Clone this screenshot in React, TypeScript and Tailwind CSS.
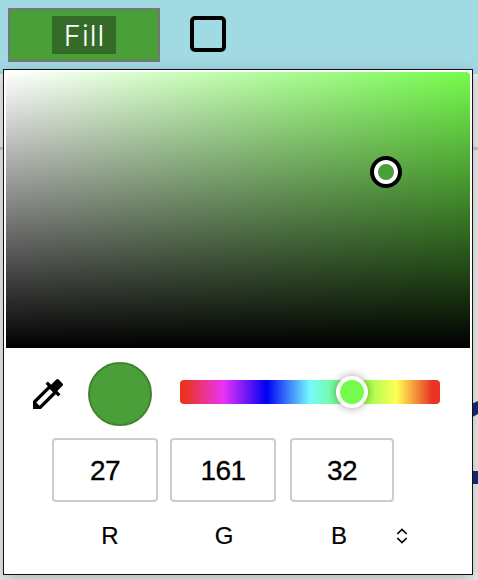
const hueStops =
  'bg-[linear-gradient(to_right,#ea3323_0%,#ea3323_2%,#ea33f7_16.67%,#0000f5_33.33%,#75fbfd_50%,#75fb4c_66.67%,#ffff54_83.33%,#ea3323_97%,#ea3323_100%)]';

function Toolbar() {
  return (
    <header className="flex h-[74px] items-start bg-[#a2dae4] pl-2 pt-2">
      <button className="flex h-[54px] w-[152px] justify-center border-2 border-[#777777] bg-[#4b9f38] pt-1.5">
        <span className="flex h-[38px] w-16 items-center justify-center bg-[#356b28] pl-px pt-px font-['Inter',sans-serif] text-[29px] font-light leading-none tracking-[1px] text-white">
          Fill
        </span>
      </button>
      <span className="ml-[30px] mt-2 size-9 rounded-[5px] border-4 border-black" />
    </header>
  );
}

function Dropper() {
  return (
    <svg className="size-10" viewBox="0 0 24 24" fill="black">
      <path d="M20.71 5.63l-2.34-2.34a.996.996 0 0 0-1.41 0l-3.12 3.12-1.93-1.91-1.41 1.41 1.42 1.42L3 16.25V21h4.75l8.92-8.92 1.42 1.42 1.41-1.41-1.92-1.92 3.12-3.12c.4-.4.4-1.03.01-1.42zM6.92 19L5 17.08l8.06-8.06 1.92 1.92L6.92 19z" />
    </svg>
  );
}

function Channel({ value, className }: { value: number; className: string }) {
  return (
    <div className={`flex h-16 items-center justify-center rounded border-2 border-[#cccccc] pt-px text-[28px] leading-none tracking-[-0.5px] [-webkit-text-stroke:0.3px_black] ${className}`}>
      {value}
    </div>
  );
}

function ColorPicker() {
  return (
    <section className="absolute left-[3px] top-[69px] h-[506px] w-[470px] border border-[#111111] bg-white px-0.5 pt-0.5 font-['Liberation_Sans',Arial,sans-serif] text-black shadow-[0_5px_16px_rgba(0,0,0,0.24)]">
      <div className="relative h-[276px] rounded-t bg-[linear-gradient(to_top,#000,transparent),linear-gradient(to_right,#fff,#75fb4c)]">
        <span className="absolute left-[364px] top-[84px] size-8 rounded-full border-4 border-black bg-black">
          <span className="block size-6 rounded-full border-4 border-white bg-[#4b9f38]" />
        </span>
      </div>
      <div className="flex h-[90px] items-start pl-[22px] pt-3.5">
        <div className="mt-3">
          <Dropper />
        </div>
        <span className="ml-5 size-16 rounded-full border-2 border-[#42832f] bg-[#4b9f38]" />
        <div className={`relative ml-7 mt-[18px] h-6 w-[260px] rounded ${hueStops}`}>
          <span className="absolute -top-1 left-[156px] size-8 rounded-full border-4 border-white bg-[#75fb4c] shadow-[0_0_8px_rgba(0,0,0,0.37)]" />
        </div>
      </div>
      <div className="flex pl-[46px]">
        <Channel value={27} className="w-[106px]" />
        <Channel value={161} className="ml-3 w-[106px]" />
        <Channel value={32} className="ml-3.5 w-[104px]" />
      </div>
      <div className="mt-[22px] flex h-6 items-center pl-[88px] text-[24px] leading-none [-webkit-text-stroke:0.2px_black]">
        <span className="w-8 text-center">R</span>
        <span className="ml-[82px] w-8 text-center">G</span>
        <span className="ml-[83px] w-8 text-center">B</span>
        <svg className="ml-[41px] h-4 w-3" viewBox="0 0 12 16" fill="none" stroke="black" strokeWidth="1.7">
          <path d="M1.3 6 6 1.5 10.7 6M1.3 10 6 14.5 10.7 10" />
        </svg>
      </div>
    </section>
  );
}

export default function App() {
  return (
    <main className="relative h-[580px] w-[478px] overflow-hidden bg-[#ececeb]">
      <Toolbar />
      <div className="mt-[73px] h-[3px] bg-[#c8c8c8]" />
      <svg className="absolute left-[468px] top-[390px]" width="10" height="100" fill="#162c78">
        <path d="M0 15.5 10 11v13L0 29.5zM0 81h10v13H0z" />
      </svg>
      <ColorPicker />
    </main>
  );
}
